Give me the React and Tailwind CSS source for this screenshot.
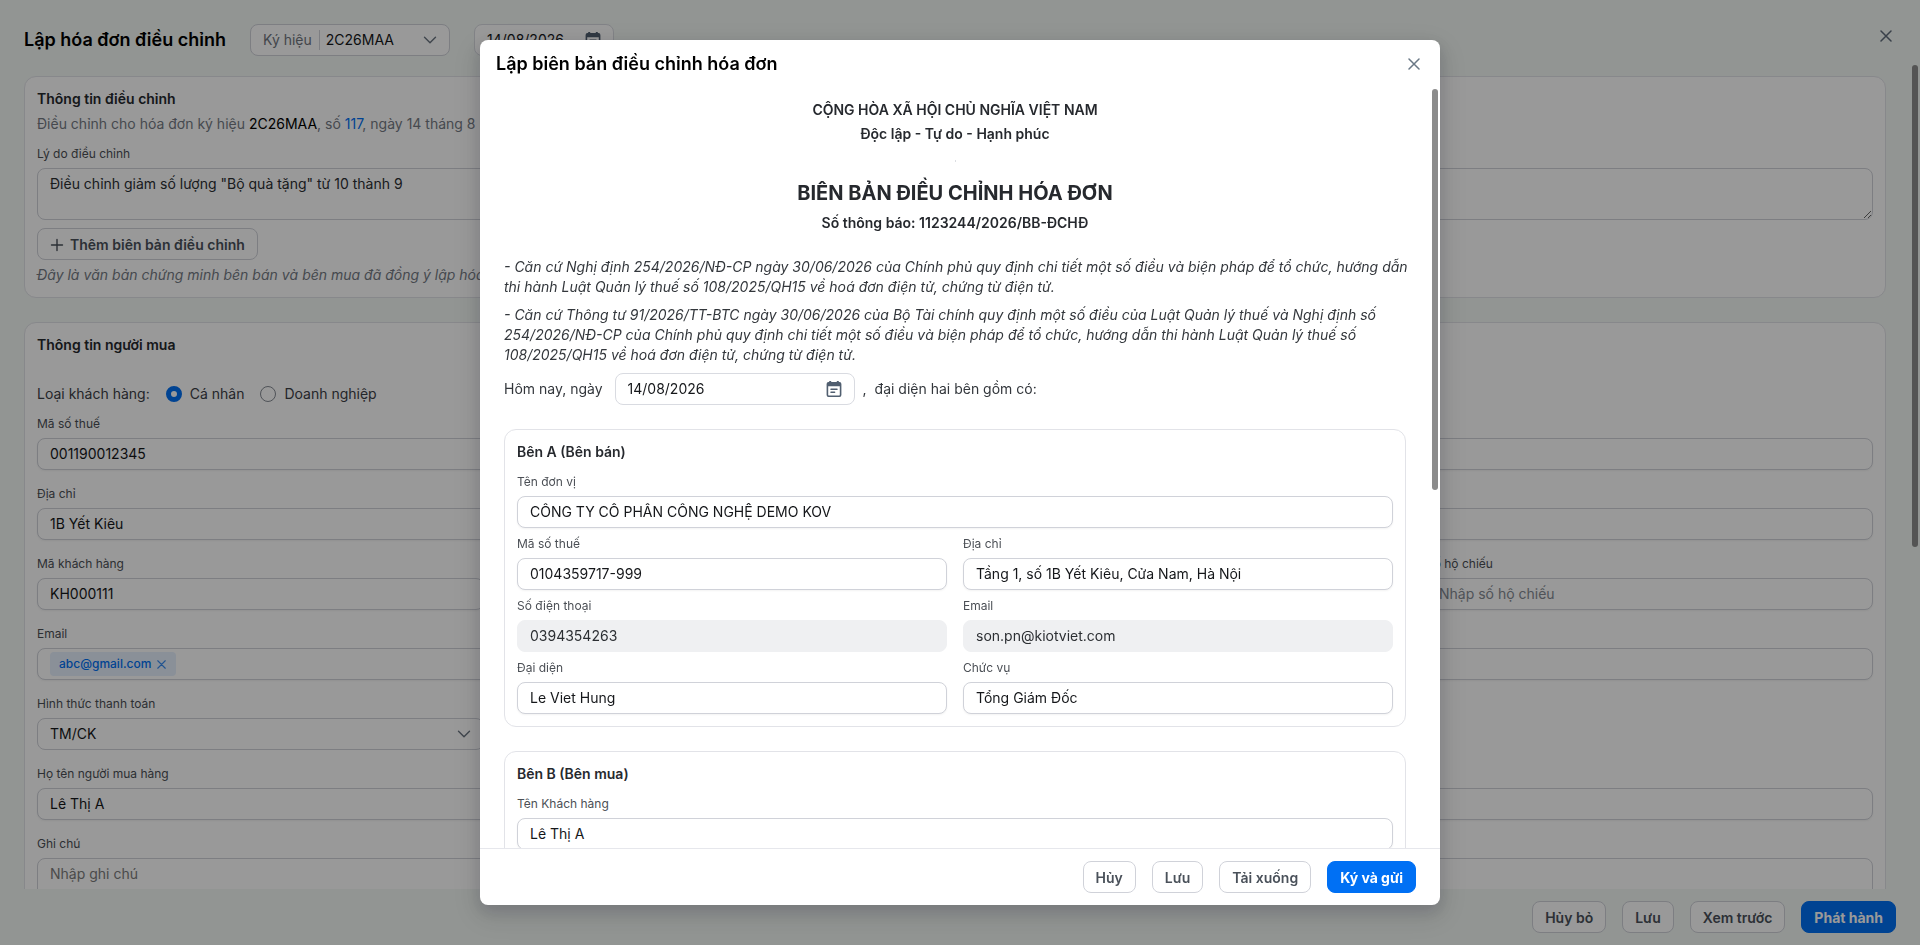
import React from "react";

const inputBase =
  "h-8 w-full min-w-0 rounded-lg border px-3 pb-0.5 text-sm outline-none placeholder:text-[#858b93]";
const inputNormal = "border-[#d0d2d9] bg-white text-[#15171a] shadow-xs";
const inputDisabled = "border-[#eff0f2] bg-[#eff0f2] text-[#2c2f33]";

function Field({ id, label, value, placeholder, disabled, className = "" }) {
  return (
    <div className={"flex min-w-0 flex-col gap-1.5 " + className}>
      <Label htmlFor={id}>{label}</Label>
      <input
        id={id}
        type="text"
        defaultValue={value}
        placeholder={placeholder}
        disabled={disabled}
        className={inputBase + " " + (disabled ? inputDisabled : inputNormal)}
      />
    </div>
  );
}

function Label({ htmlFor, children }) {
  return (
    <label htmlFor={htmlFor} className="block text-xs leading-4 text-[#4b4f55]">
      {children}
    </label>
  );
}

function Chevron() {
  return (
    <svg viewBox="0 0 14 14" className="h-3.5 w-3.5 shrink-0 text-[#6a7480]" fill="none" stroke="currentColor" strokeWidth="1.4" strokeLinecap="round" strokeLinejoin="round" aria-hidden="true">
      <path d="M1.5 4.2 7 9.7l5.5-5.5" />
    </svg>
  );
}

function Cross({ className }) {
  return (
    <svg viewBox="0 0 12 12" className={className} fill="none" stroke="currentColor" strokeWidth="1.5" strokeLinecap="round" aria-hidden="true">
      <path d="M1 1l10 10M11 1l-10 10" />
    </svg>
  );
}

function CalendarIcon() {
  return (
    <svg viewBox="0 0 16 18" className="h-[18px] w-4 shrink-0 text-[#515f70]" aria-hidden="true">
      <path
        fill="currentColor"
        fillRule="evenodd"
        d="M3.2 1.1h2V2h5.600v-.9h2V2h.7A1.900 1.900 0 0 1 15.400 3.900v11.200a1.900 1.900 0 0 1-1.900 1.900h-11a1.900 1.900 0 0 1-1.900-1.900V3.900A1.900 1.900 0 0 1 2.500 2h.7zM2.200 6.200v8.700c0 .300.200.500.500.500h10.600c.300 0 .500-.200.500-.500V6.200z"
      />
      <path d="M5 9.200h6M5 12.200h3.600" stroke="currentColor" strokeWidth="1.5" strokeLinecap="round" fill="none" />
    </svg>
  );
}

function DateField({ id, label, className }) {
  return (
    <div className={"flex h-8 items-center rounded-lg border border-[#d9dbe1] bg-white px-3 " + className}>
      <input
        id={id}
        type="text"
        aria-label={label}
        defaultValue="14/08/2026"
        className="w-full min-w-0 flex-1 bg-transparent text-sm text-[#15171a] outline-none"
      />
      <CalendarIcon />
    </div>
  );
}

function Button({ primary, children }) {
  return (
    <button
      type="button"
      className={
        "flex h-8 items-center gap-1.5 rounded-lg border px-3 pt-0.5 text-sm whitespace-nowrap " +
        (primary
          ? "border-[#0070f4] bg-[#0070f4] font-bold text-white"
          : "border-[#d0d2d9] bg-white font-semibold text-[#4a515a]")
      }
    >
      {children}
    </button>
  );
}

function Card({ title, children }) {
  return (
    <section className="rounded-xl border border-[#e2e3e8] bg-white p-3">
      <h2 className="text-sm leading-5 font-semibold text-[#26292e]">{title}</h2>
      {children}
    </section>
  );
}

function InvoicePage() {
  return (
    <div className="flex h-full flex-col bg-[#f3f8f5]">
      <header className="flex h-16 shrink-0 items-start justify-between pr-7 pl-6">
        <div className="flex items-center gap-6 pt-6">
          <h1 className="text-lg leading-8 font-semibold text-black">Lập hóa đơn điều chỉnh</h1>
          <div className="flex h-8 w-[200px] items-center rounded-lg border border-[#d0d2d9] bg-white px-3">
            <label htmlFor="symbol" className="text-sm text-[#6f757d]">Ký hiệu</label>
            <span className="mr-1.5 ml-[7px] h-5 w-px bg-[#d0d2d9]" />
            <select id="symbol" className="min-w-0 flex-1 appearance-none bg-transparent text-sm text-[#15171a] outline-none">
              <option>2C26MAA</option>
            </select>
            <Chevron />
          </div>
          <DateField id="invoice-date" label="Ngày hóa đơn" className="w-[140px]" />
        </div>
        <button type="button" aria-label="Đóng" className="pt-[30px] pl-3 text-[#5f6c7b]">
          <Cross className="h-3 w-3" />
        </button>
      </header>

      <div className="flex min-h-0 flex-1">
        <main className="flex min-w-0 flex-1 flex-col gap-6 overflow-y-auto px-6 py-3 [scrollbar-width:none]">
          <Card title="Thông tin điều chỉnh">
            <p className="mt-[5px] text-sm leading-5 text-[#757b84]">
              Điều chỉnh cho hóa đơn ký hiệu <span className="text-black">2C26MAA</span>, số{" "}
              <a href="#117" className="text-[#0070f4]">117</a>, ngày 14 tháng 8 năm 2026
            </p>
            <div className="mt-3 flex flex-col gap-1.5">
              <Label htmlFor="reason">Lý do điều chỉnh</Label>
              <textarea
                id="reason"
                defaultValue={'Điều chỉnh giảm số lượng "Bộ quà tặng" từ 10 thành 9'}
                className="h-[52px] w-full resize rounded-lg border border-[#d0d2d9] bg-white px-3 py-[5px] text-sm leading-5 text-[#2c2f33] outline-none"
              />
            </div>
            <div className="mt-2 flex">
              <Button>
                <svg viewBox="0 0 14 14" className="h-3.5 w-3.5" fill="none" stroke="currentColor" strokeWidth="1.4" strokeLinecap="round" aria-hidden="true">
                  <path d="M7 1.500v11M1.500 7h11" />
                </svg>
                Thêm biên bản điều chỉnh
              </Button>
            </div>
            <p className="mt-[5px] text-sm leading-5 text-[#757b84] italic">
              Đây là văn bản chứng minh bên bán và bên mua đã đồng ý lập hóa đơn điều chỉnh
            </p>
          </Card>

          <Card title="Thông tin người mua">
            <div role="radiogroup" aria-labelledby="buyer-type" className="mt-[29px] flex items-center gap-4 text-sm leading-5 text-[#3c4046]">
              <span id="buyer-type">Loại khách hàng:</span>
              <label className="flex items-center gap-2">
                <input type="radio" name="type" defaultChecked className="h-4 w-4 appearance-none rounded-full border border-[#858b93] bg-white checked:border-5 checked:border-[#0070f4]" />
                Cá nhân
              </label>
              <label className="flex items-center gap-2">
                <input type="radio" name="type" className="h-4 w-4 appearance-none rounded-full border border-[#858b93] bg-white checked:border-5 checked:border-[#0070f4]" />
                Doanh nghiệp
              </label>
            </div>
            <div className="mt-3 grid grid-cols-4 gap-4">
              <Field id="buyer-tax" label="Mã số thuế" value="001190012345" className="col-span-4" />
              <Field id="buyer-address" label="Địa chỉ" value="1B Yết Kiêu" className="col-span-4" />
              <Field id="buyer-code" label="Mã khách hàng" value="KH000111" />
              <Field id="buyer-passport" label="Số hộ chiếu" placeholder="Nhập số hộ chiếu" className="col-start-4" />
              <div className="col-span-4 flex flex-col gap-1.5">
                <Label htmlFor="buyer-email">Email</Label>
                <div className="flex h-8 items-center rounded-lg border border-[#d0d2d9] bg-white px-3 shadow-xs">
                  <span className="flex h-6 items-center gap-1.5 rounded bg-[#e6f1fe] pr-2.5 pl-[9px] text-xs font-medium text-[#0070f4]">
                    abc@gmail.com
                    <button type="button" aria-label="Xóa abc@gmail.com" className="text-[#3a8cf0]">
                      <Cross className="h-[9px] w-[9px]" />
                    </button>
                  </span>
                  <input id="buyer-email" type="text" className="min-w-0 flex-1 bg-transparent text-sm outline-none" />
                </div>
              </div>
              <div className="flex flex-col gap-1.5">
                <Label htmlFor="payment">Hình thức thanh toán</Label>
                <div className="flex h-8 items-center rounded-lg border border-[#d0d2d9] bg-white px-3">
                  <select id="payment" className="min-w-0 flex-1 appearance-none bg-transparent text-sm text-[#15171a] outline-none">
                    <option>TM/CK</option>
                  </select>
                  <Chevron />
                </div>
              </div>
              <Field id="buyer-name" label="Họ tên người mua hàng" value="Lê Thị A" className="col-span-4" />
              <div className="col-span-4 flex flex-col gap-1.5">
                <Label htmlFor="note">Ghi chú</Label>
                <textarea
                  id="note"
                  placeholder="Nhập ghi chú"
                  className="h-[52px] w-full rounded-lg border border-[#d0d2d9] bg-white px-3 py-[5px] text-sm leading-5 outline-none placeholder:text-[#7c7c7c]"
                />
              </div>
            </div>
          </Card>
        </main>
        <div className="flex w-2.5 justify-center pt-px" aria-hidden="true">
          <div className="h-[482px] w-1.5 rounded-full bg-[#8c8c8c]" />
        </div>
      </div>

      <footer className="flex h-14 shrink-0 items-center justify-end gap-4 px-6">
        <Button>Hủy bỏ</Button>
        <Button>Lưu</Button>
        <Button>Xem trước</Button>
        <Button primary>Phát hành</Button>
      </footer>
    </div>
  );
}

function RecordDialog() {
  return (
    <div
      role="dialog"
      aria-modal="true"
      aria-labelledby="dialog-title"
      className="flex h-full w-1/2 flex-col overflow-hidden rounded-lg bg-white shadow-[0_6px_16px_rgba(20,20,40,0.16),0_9px_28px_8px_rgba(20,20,40,0.08)]"
    >
      <header className="flex h-12 shrink-0 items-center justify-between pr-5 pl-4">
        <h2 id="dialog-title" className="text-lg leading-6 font-semibold text-black">
          Lập biên bản điều chỉnh hóa đơn
        </h2>
        <button type="button" aria-label="Đóng" className="text-[#6a7886]">
          <Cross className="h-3 w-3" />
        </button>
      </header>

      <div className="flex min-h-0 flex-1">
        <div className="min-w-0 flex-1 overflow-y-auto px-6 py-3 text-sm leading-5 text-[#33373c] [scrollbar-width:none]">
          <div className="flex flex-col gap-1 text-center font-semibold text-[#26292e]">
            <p>CỘNG HÒA XÃ HỘI CHỦ NGHĨA VIỆT NAM</p>
            <p>Độc lập - Tự do - Hạnh phúc</p>
          </div>
          <hr className="mx-auto mt-4 mb-[19px] h-0.5 w-px border-0 bg-[#dcdee2]" />
          <div className="flex flex-col gap-2 text-center text-[#26292e]">
            <h3 className="text-xl leading-6 font-bold">BIÊN BẢN ĐIỀU CHỈNH HÓA ĐƠN</h3>
            <p className="font-semibold">Số thông báo: 1123244/2026/BB-ĐCHĐ</p>
          </div>
          <div className="mt-6 -mr-3 flex flex-col gap-2 italic">
            <p>
              - Căn cứ Nghị định 254/2026/NĐ-CP ngày 30/06/2026 của Chính phủ quy định chi tiết một số điều và biện pháp
              để tổ chức, hướng dẫn thi hành Luật Quản lý thuế số 108/2025/QH15 về hoá đơn điện tử, chứng từ điện tử.
            </p>
            <p>
              - Căn cứ Thông tư 91/2026/TT-BTC ngày 30/06/2026 của Bộ Tài chính quy định một số điều của Luật Quản lý
              thuế và Nghị định số 254/2026/NĐ-CP của Chính phủ quy định chi tiết một số điều và biện pháp để tổ chức,
              hướng dẫn thi hành Luật Quản lý thuế số 108/2025/QH15 về hoá đơn điện tử, chứng từ điện tử.
            </p>
          </div>
          <div className="mt-2 flex items-center">
            <label htmlFor="record-date">Hôm nay, ngày</label>
            <DateField id="record-date" label="Ngày lập biên bản" className="mr-2 ml-3 w-[240px]" />
            <span>,</span>
            <span className="ml-2">đại diện hai bên gồm có:</span>
          </div>
          <div className="mt-6 flex flex-col gap-6">
            <Card title="Bên A (Bên bán)">
              <div className="mt-3 grid grid-cols-2 gap-x-4 gap-y-2">
                <Field id="a-name" label="Tên đơn vị" value="CÔNG TY CỔ PHẦN CÔNG NGHỆ DEMO KOV" className="col-span-2" />
                <Field id="a-tax" label="Mã số thuế" value="0104359717-999" />
                <Field id="a-address" label="Địa chỉ" value="Tầng 1, số 1B Yết Kiêu, Cửa Nam, Hà Nội" />
                <Field id="a-phone" label="Số điện thoại" value="0394354263" disabled />
                <Field id="a-email" label="Email" value="son.pn@kiotviet.com" disabled />
                <Field id="a-person" label="Đại diện" value="Le Viet Hung" />
                <Field id="a-role" label="Chức vụ" value="Tổng Giám Đốc" />
              </div>
            </Card>
            <Card title="Bên B (Bên mua)">
              <div className="mt-3">
                <Field id="b-name" label="Tên Khách hàng" value="Lê Thị A" />
              </div>
            </Card>
          </div>
        </div>
        <div className="flex w-2.5 justify-center pt-px" aria-hidden="true">
          <div className="h-[401px] w-1.5 rounded-full bg-[#8c8c8c]" />
        </div>
      </div>

      <footer className="flex shrink-0 items-center justify-end gap-4 border-t border-[#e6e7ec] px-6 py-3">
        <Button>Hủy</Button>
        <Button>Lưu</Button>
        <Button>Tải xuống</Button>
        <Button primary>Ký và gửi</Button>
      </footer>
    </div>
  );
}

export default function App() {
  return (
    <div className="h-screen overflow-hidden font-['Inter','Noto_Sans',sans-serif]">
      <InvoicePage />
      <div className="fixed inset-0 flex justify-center bg-black/40 py-10">
        <RecordDialog />
      </div>
    </div>
  );
}
